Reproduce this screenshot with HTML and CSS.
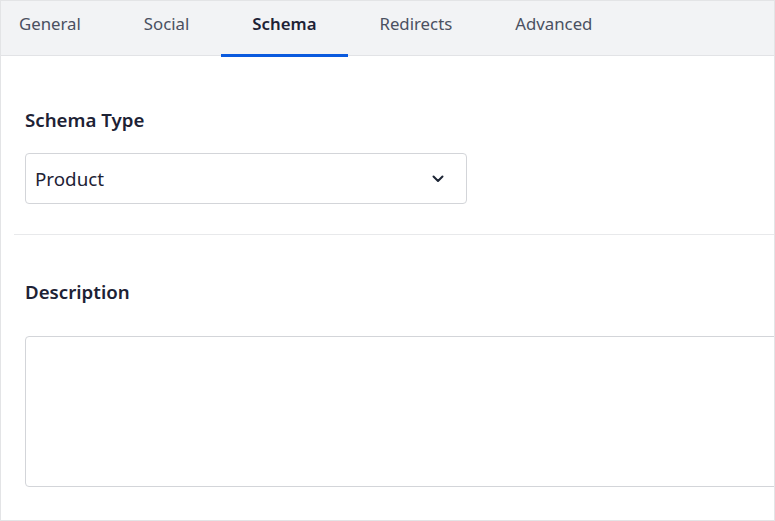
FILE: index.html
```html
<!DOCTYPE html>
<html>
<head>
<meta charset="utf-8">
<link rel="stylesheet" href="styles.css">
</head>
<body>
<div class="panel">
  <div class="tabbar">
    <div class="tabs">
      <div class="tab">General</div>
      <div class="tab">Social</div>
      <div class="tab active">Schema</div>
      <div class="tab">Redirects</div>
      <div class="tab">Advanced</div>
    </div>
  </div>
  <div class="section first">
    <div class="label">Schema Type</div>
    <div class="select">
      <span class="value">Product</span>
      <svg class="chev" width="12" height="8" viewBox="0 0 12 8"><path d="M1.5 1.5 L6 6 L10.5 1.5" fill="none" stroke="#1d2535" stroke-width="2" stroke-linecap="round" stroke-linejoin="round"/></svg>
    </div>
  </div>
  <div class="divider"></div>
  <div class="section second">
    <div class="label">Description</div>
    <div class="textarea"></div>
  </div>
</div>
</body>
</html>
```

FILE: styles.css
```css
* { box-sizing: border-box; }
html, body { margin: 0; padding: 0; background: #fff; }
body { font-family: "Noto Sans", "Open Sans", sans-serif; width: 775px; height: 521px; overflow: hidden; }
.panel {
  width: 775px;
  height: 521px;
  border: 1px solid #e3e4e6;
  overflow: hidden;
  background: #fff;
}
.tabbar {
  height: 55px;
  background: #f2f3f5;
  border-bottom: 1px solid #e2e3e6;
  display: flex;
}
.tabs { display: flex; margin-left: -13.5px; }
.tab {
  padding: 0 31.5px;
  height: 54px;
  line-height: 46px;
  font-size: 16.8px;
  color: #4a5061;
  border-bottom: 3px solid transparent;
  white-space: nowrap;
}
.tab.active {
  color: #1d2235;
  font-weight: 600;
  border-bottom-color: #0a5ade;
  margin-bottom: -2px;
  height: 56px;
}
.section { padding: 0 0 0 24px; }
.section.first { padding-top: 51px; padding-bottom: 30px; }
.label {
  font-size: 18.7px;
  font-weight: 600;
  color: #1d2235;
  line-height: 26px;
}
.section.first .label { margin-bottom: 20px; }
.select {
  width: 442px;
  height: 51px;
  border: 1px solid #d3d5d9;
  border-radius: 4px;
  display: flex;
  align-items: center;
  justify-content: space-between;
  padding: 0 22px 0 9px;
  font-size: 18.8px;
  color: #1d2235;
}
.divider { height: 1px; background: #e8e9eb; margin-left: 13px; }
.section.second { padding-top: 44px; }
.section.second .label { margin-bottom: 31px; }
.textarea {
  width: 780px;
  height: 151px;
  border: 1px solid #d3d5d9;
  border-radius: 4px;
}
```
